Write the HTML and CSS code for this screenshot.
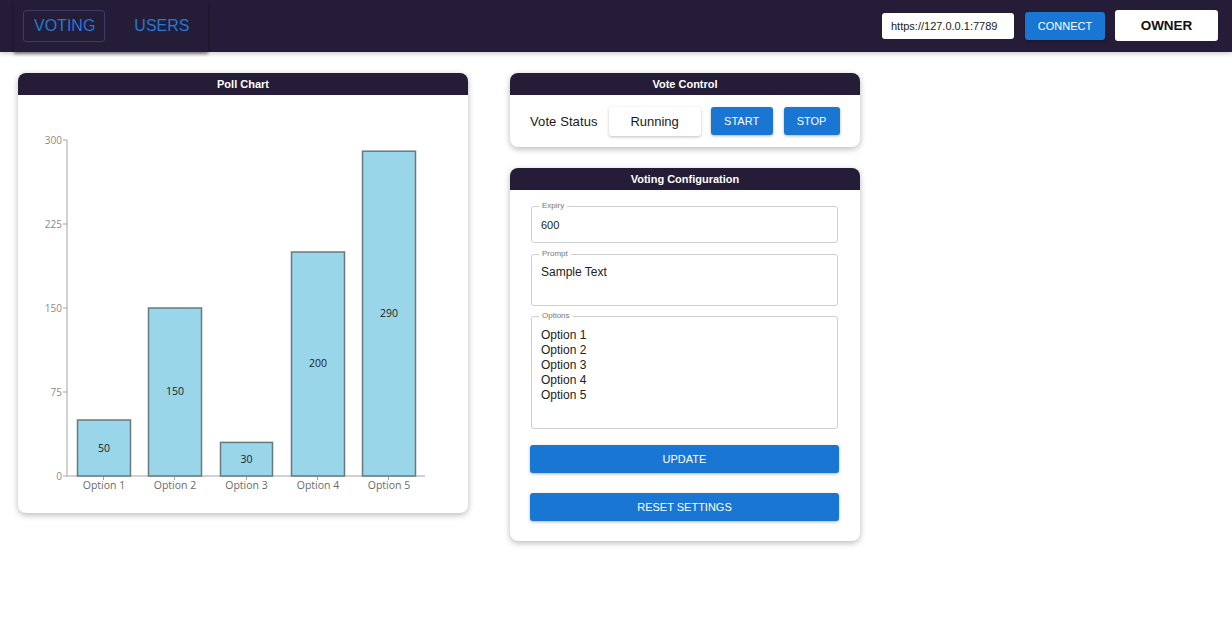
FILE: index.html
```html
<!DOCTYPE html>
<html lang="en">
<head>
<meta charset="utf-8">
<title>Voting</title>
<link rel="stylesheet" href="styles.css">
</head>
<body>
<header class="topbar">
  <nav class="tabs">
    <a class="tab tab-active">VOTING</a>
    <a class="tab">USERS</a>
  </nav>
  <div class="conn">
    <input class="url" type="text" value="https://127.0.0.1:7789">
    <button class="btn btn-connect">CONNECT</button>
    <button class="btn-owner">OWNER</button>
  </div>
</header>
<main class="page">
  <section class="card chart-card">
    <h2 class="card-title">Poll Chart</h2>
    <div class="chart-body">
      <svg class="chart" width="450" height="418" viewBox="0 0 450 418">
        <g class="axis">
          <line x1="49" y1="45" x2="49" y2="381"/>
          <line x1="49" y1="381" x2="407" y2="381"/>
          <line x1="45" y1="45" x2="49" y2="45"/>
          <line x1="45" y1="129" x2="49" y2="129"/>
          <line x1="45" y1="213" x2="49" y2="213"/>
          <line x1="45" y1="297" x2="49" y2="297"/>
          <line x1="45" y1="381" x2="49" y2="381"/>
          <line x1="85.5" y1="381" x2="85.5" y2="385"/>
          <line x1="156.5" y1="381" x2="156.5" y2="385"/>
          <line x1="228.5" y1="381" x2="228.5" y2="385"/>
          <line x1="299.5" y1="381" x2="299.5" y2="385"/>
          <line x1="370.5" y1="381" x2="370.5" y2="385"/>
        </g>
        <g class="ylabels">
          <text x="44" y="49">300</text>
          <text x="44" y="133">225</text>
          <text x="44" y="217">150</text>
          <text x="44" y="301">75</text>
          <text x="44" y="385">0</text>
        </g>
        <g class="bars">
          <rect x="59.5" y="325" width="53" height="56"/>
          <rect x="130.5" y="213" width="53" height="168"/>
          <rect x="202.5" y="347.4" width="52" height="33.6"/>
          <rect x="273.5" y="157" width="53" height="224"/>
          <rect x="344.5" y="56.2" width="53" height="324.8"/>
        </g>
        <g class="vlabels">
          <text x="86" y="357">50</text>
          <text x="157" y="300">150</text>
          <text x="228.5" y="368">30</text>
          <text x="300" y="272">200</text>
          <text x="371" y="222">290</text>
        </g>
        <g class="xlabels">
          <text x="86" y="394">Option 1</text>
          <text x="157" y="394">Option 2</text>
          <text x="228.5" y="394">Option 3</text>
          <text x="300" y="394">Option 4</text>
          <text x="371" y="394">Option 5</text>
        </g>
      </svg>
    </div>
  </section>

  <div class="side">
    <section class="card">
      <h2 class="card-title">Vote Control</h2>
      <div class="control-body">
        <span class="status-label">Vote Status</span>
        <span class="status-box">Running</span>
        <button class="btn btn-start">START</button>
        <button class="btn btn-stop">STOP</button>
      </div>
    </section>

    <section class="card">
      <h2 class="card-title">Voting Configuration</h2>
      <form class="config-body">
        <fieldset class="field field-expiry">
          <legend>Expiry</legend>
          <input class="field-input" type="text" value="600">
        </fieldset>
        <fieldset class="field field-prompt">
          <legend>Prompt</legend>
          <textarea class="field-area area-prompt">Sample Text</textarea>
        </fieldset>
        <fieldset class="field field-options">
          <legend>Options</legend>
          <textarea class="field-area area-options">Option 1
Option 2
Option 3
Option 4
Option 5</textarea>
        </fieldset>
        <button type="button" class="btn btn-wide btn-update">UPDATE</button>
        <button type="button" class="btn btn-wide btn-reset">RESET SETTINGS</button>
      </form>
    </section>
  </div>
</main>
</body>
</html>
```

FILE: styles.css
```css
* { box-sizing: border-box; }

html, body {
  margin: 0;
  padding: 0;
  background: #ffffff;
  font-family: "Liberation Sans", Arial, sans-serif;
  color: #222;
}

.topbar {
  height: 52px;
  background: #251c38;
  display: flex;
  align-items: stretch;
  justify-content: space-between;
  box-shadow: 0 2px 4px rgba(0, 0, 0, 0.18);
  position: relative;
  z-index: 2;
}

.tabs {
  margin-left: 14px;
  width: 194px;
  display: flex;
  align-items: center;
  padding-left: 9px;
  box-shadow: 0 2px 3px rgba(0, 0, 0, 0.45);
}

.tab {
  font-size: 16px;
  color: #2279d6;
  line-height: 30px;
  height: 32px;
  padding: 0 9px 0 10px;
  border: 1px solid transparent;
  border-radius: 3px;
  cursor: pointer;
}

.tab-active {
  border-color: #3a3d69;
  margin-right: 18px;
}

.conn {
  display: flex;
  align-items: center;
  margin-right: 14px;
  padding-bottom: 1px;
}

.url {
  width: 132px;
  height: 26px;
  border: none;
  border-radius: 3px;
  padding: 0 9px;
  font-family: "Liberation Sans", Arial, sans-serif;
  font-size: 11px;
  color: #222;
  background: #fff;
  margin-right: 11px;
  outline: none;
}

.btn {
  border: none;
  border-radius: 3px;
  background: #1976d2;
  color: #fff;
  font-family: "Liberation Sans", Arial, sans-serif;
  font-size: 11px;
  padding: 0;
  box-shadow: 0 1px 3px rgba(0, 0, 0, 0.3);
  cursor: pointer;
}

.btn-connect {
  width: 80px;
  height: 28px;
  margin-right: 10px;
}

.btn-owner {
  width: 103px;
  height: 31px;
  border: none;
  border-radius: 3px;
  background: #fff;
  color: #111;
  font-family: "Liberation Sans", Arial, sans-serif;
  font-weight: bold;
  font-size: 13.5px;
  padding: 0;
}

.page {
  display: flex;
  align-items: flex-start;
  gap: 42px;
  padding: 21px 18px;
}

.card {
  background: #fff;
  border-radius: 8px;
  overflow: hidden;
  box-shadow: 0 2px 6px rgba(0, 0, 0, 0.28);
}

.card-title {
  margin: 0;
  height: 22px;
  line-height: 22px;
  background: #251c38;
  color: #fff;
  font-size: 11px;
  font-weight: bold;
  text-align: center;
}

.chart-card {
  width: 450px;
}

.chart-body {
  height: 418px;
}

.chart {
  display: block;
  font-family: "Open Sans", "Noto Sans", sans-serif;
}

.axis line {
  stroke: #a3a3a3;
  stroke-width: 1;
}

.ylabels text {
  font-size: 10px;
  fill: #8a8a8a;
  text-anchor: end;
}

.xlabels text {
  font-size: 10.5px;
  fill: #6a6a6a;
  text-anchor: middle;
}

.vlabels text {
  font-size: 10.5px;
  fill: #222;
  text-anchor: middle;
}

.bars rect {
  fill: #99d6e9;
  stroke: #687a80;
  stroke-width: 1.5;
}

.side {
  width: 350px;
  display: flex;
  flex-direction: column;
  gap: 21px;
}

.control-body {
  height: 52px;
  display: flex;
  align-items: center;
  padding-left: 20px;
}

.status-label {
  font-size: 13px;
  color: #1a1a1a;
  margin-right: 11px;
  letter-spacing: 0.1px;
}

.status-box {
  width: 92px;
  height: 29px;
  line-height: 29px;
  text-align: center;
  font-size: 13px;
  color: #1a1a1a;
  background: #fff;
  border-radius: 3px;
  box-shadow: 0 1px 3px rgba(0, 0, 0, 0.25);
  margin-right: 10px;
}

.btn-start {
  width: 62px;
  height: 28px;
  margin-right: 11px;
}

.btn-stop {
  width: 56px;
  height: 28px;
}

.config-body {
  display: flex;
  flex-direction: column;
  padding: 11px 22px 20px 21px;
}

.field {
  margin: 0;
  padding: 0 8px 4px 8px;
  border: 1px solid #cfcfcf;
  border-radius: 3px;
  min-width: 0;
}

.field-prompt {
  margin-top: 6px;
}

.field-options {
  margin-top: 5px;
}

.field legend {
  font-size: 8px;
  line-height: 10px;
  color: #777;
  padding: 0 3px;
  margin-left: -1px;
}

.field-input {
  display: block;
  width: 100%;
  height: 27px;
  border: none;
  outline: none;
  padding: 0 0 0 1px;
  font-family: "Liberation Sans", Arial, sans-serif;
  font-size: 11px;
  color: #222;
  background: transparent;
}

.field-area {
  display: block;
  width: 100%;
  border: none;
  outline: none;
  resize: none;
  padding: 0 0 0 1px;
  font-family: "Liberation Sans", Arial, sans-serif;
  font-size: 12px;
  line-height: 15px;
  color: #222;
  background: transparent;
  overflow: hidden;
}

.area-prompt {
  height: 42px;
  padding-top: 6px;
}

.area-options {
  height: 103px;
  padding-top: 7px;
}

.btn-wide {
  width: 309px;
  height: 28px;
  margin-left: -1px;
  font-size: 11px;
}

.btn-update {
  margin-top: 16px;
}

.btn-reset {
  margin-top: 20px;
}
```
